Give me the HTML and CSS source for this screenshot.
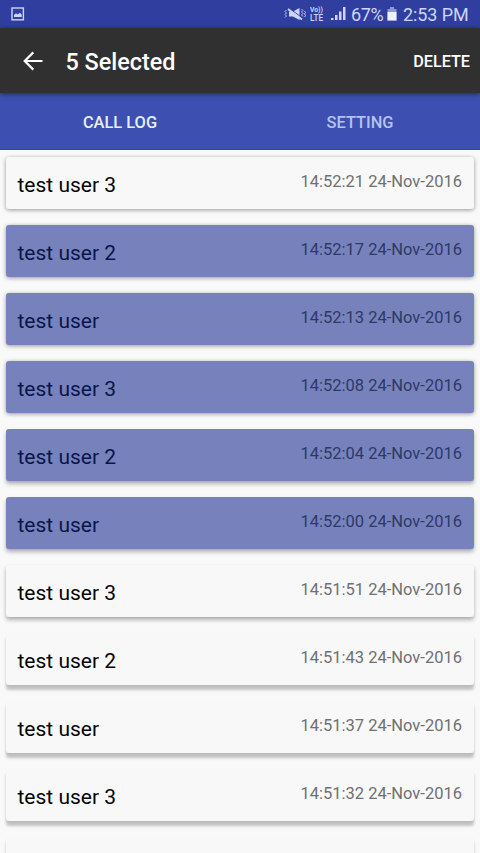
FILE: index.html
```html
<!DOCTYPE html>
<html lang="en">
<head>
<meta charset="utf-8">
<title>Call Log</title>
<link rel="stylesheet" href="styles.css">
</head>
<body>
<div class="screen">
  <header class="status">
    <svg class="picture" width="14" height="14" viewBox="0 0 14 14"><rect x="1" y="1" width="11.4" height="11.8" fill="none" stroke="currentColor" stroke-width="1.4"/><path d="M3 10V8l2-1.7 1.6 1.3L9 5.7l1.7 2.1V10z" fill="currentColor"/></svg>
    <div class="indicators">
      <svg class="mute" width="22" height="14" viewBox="0 0 22 14"><path d="M5 4.5h4L15.5 1v12L9 9.5H5z" fill="currentColor"/><path d="M5 1.2L18.5 11" stroke="#303f9f" stroke-width="1"/><path d="M4 2l14 10.5" stroke="currentColor" stroke-width="1.8"/><path d="M2.5 3L1 4.5 2.5 6 1 7.5 2.5 9 1 10.5M17.5 2L19 3.5 17.5 5 19 6.5 17.5 8 19 9.5M20.5 4l1 1.5-1 1.5 1 1.5-1 1.5" fill="none" stroke="currentColor" stroke-width=".9"/></svg>
      <div class="volte"><span>Vo))</span><span class="lte">LTE</span></div>
      <svg class="signal" width="15" height="14" viewBox="0 0 15 14" fill="currentColor"><path d="M0 11h2.5v2H0zM4 8h2.5v5H4zM8 4.5h2.5V13H8zM12 0h2.5v13H12z"/></svg>
      <span class="percent">67%</span>
      <svg class="battery" width="10" height="14" viewBox="0 0 10 14"><path d="M3 0h4v2h2.5v11.5h-9V2H3z" fill="#8c98d2"/><path d="M.5 5h9v8.5h-9z" fill="#edf0ff"/></svg>
      <span class="clock">2:53 PM</span>
    </div>
  </header>
  <div class="actionbar">
    <svg class="back" width="20" height="20" viewBox="0 0 20 20"><path d="M19.5 10H2M10.3 1.4L1.7 10l8.6 8.6" fill="none" stroke="#fff" stroke-width="2.2"/></svg>
    <h1 class="title">5 Selected</h1>
    <button class="delete">DELETE</button>
  </div>
  <nav class="tabs"><div class="tab active">CALL LOG</div><div class="tab">SETTING</div></nav>
  <main class="list">
    <article class="card s1"><span class="name">test user 3</span><time>14:52:21 24-Nov-2016</time></article>
    <article class="card s1 selected"><span class="name">test user 2</span><time>14:52:17 24-Nov-2016</time></article>
    <article class="card s1 selected"><span class="name">test user</span><time>14:52:13 24-Nov-2016</time></article>
    <article class="card s1 selected"><span class="name">test user 3</span><time>14:52:08 24-Nov-2016</time></article>
    <article class="card s2 selected"><span class="name">test user 2</span><time>14:52:04 24-Nov-2016</time></article>
    <article class="card s2 selected"><span class="name">test user</span><time>14:52:00 24-Nov-2016</time></article>
    <article class="card s2"><span class="name">test user 3</span><time>14:51:51 24-Nov-2016</time></article>
    <article class="card s3"><span class="name">test user 2</span><time>14:51:43 24-Nov-2016</time></article>
    <article class="card s3"><span class="name">test user</span><time>14:51:37 24-Nov-2016</time></article>
    <article class="card s3"><span class="name">test user 3</span><time>14:51:32 24-Nov-2016</time></article>
    <article class="card s3"></article>
  </main>
</div>
</body>
</html>
```
FILE: styles.css
```css
* { box-sizing: border-box; }
body { margin: 0; font-family: Roboto, sans-serif; }
.screen { display: flex; flex-direction: column; width: 480px; height: 853px; overflow: hidden; background: #f9f9f9; }
.status { flex: none; display: flex; align-items: center; justify-content: space-between; height: 28px; padding: 0 12px 0 11px; background: #303f9f; color: #cdd5fa; }
.indicators { display: flex; align-items: center; }
.mute { margin-right: 4px; }
.volte { display: flex; flex-direction: column; width: 17px; font-size: 6.8px; line-height: 8px; font-weight: 700; margin-right: 4px; }
.volte .lte { font-size: 8.2px; line-height: 9px; font-weight: 500; }
.signal { margin-right: 5px; }
.percent, .clock { height: 28px; padding-top: 1px; font-size: 18px; line-height: 28px; white-space: nowrap; }
.percent { width: 33px; margin-right: 3px; letter-spacing: -0.4px; }
.battery { margin-right: 6px; }
.clock { width: 65px; letter-spacing: -0.1px; }
.actionbar { flex: none; position: relative; display: flex; align-items: center; height: 65px; padding: 1px 10px 0 23px; background: #303030; color: #fff; box-shadow: 0 1px 5px rgba(0,0,0,.5); }
.title { margin: 1px auto 0 22.5px; font-size: 23.4px; font-weight: 500; line-height: 30px; }
.delete { margin-top: 2px; padding: 0; border: 0; background: none; color: #fff; font: 500 16.2px/20px Roboto, sans-serif; }
.tabs { flex: none; display: grid; grid-template-columns: 1fr 1fr; height: 56.5px; background: #3d50b1; border-bottom: 1px solid #3544a5; }
.tab { display: flex; align-items: center; justify-content: center; padding-top: 2.5px; font-size: 16.4px; font-weight: 500; color: #b7c1ee; }
.tab.active { color: #e7f0ff; }
.list { display: flex; flex-direction: column; gap: 16px; padding: 7.75px 6px 0; }
.card { flex: none; display: flex; align-items: flex-start; justify-content: space-between; height: 52px; padding: 0 12px 0 11.5px; border-radius: 3px; background: #f8f8f8; color: #050505; }
.name { padding-top: 12.5px; font-size: 21px; line-height: 30px; }
time { padding-top: 15px; font-size: 16.5px; line-height: 20px; color: #707070; }
.selected { background: #7782bd; color: #0a164a; }
.selected time { color: #2e3966; }
.s1 { box-shadow: 0 1px 4px rgba(0,0,0,.4); }
.s2 { box-shadow: 0 3px 4px rgba(0,0,0,.28), 0 1px 2px rgba(0,0,0,.08); }
.s3 { box-shadow: 0 5px 3px rgba(0,0,0,.22), 0 1px 2px rgba(0,0,0,.05); }
```
